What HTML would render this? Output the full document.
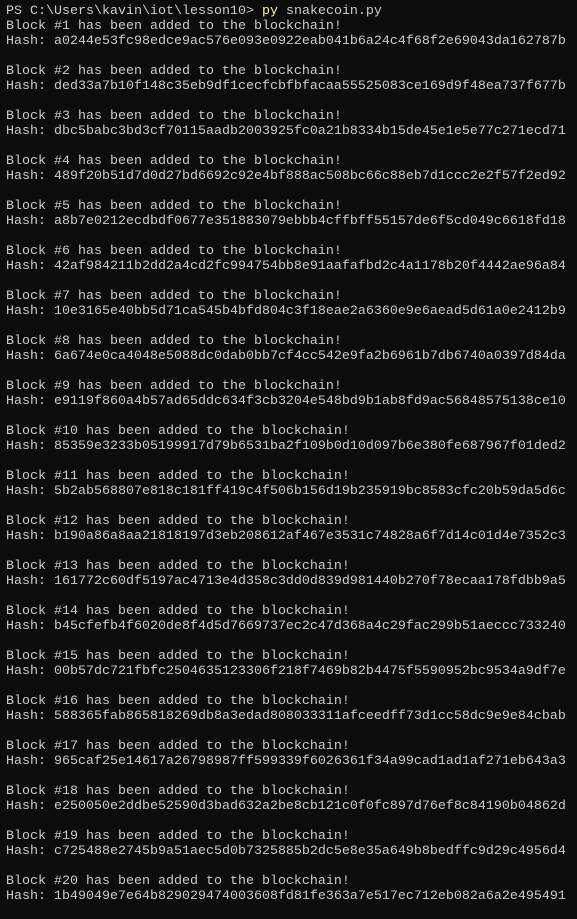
<!DOCTYPE html>
<html><head><meta charset="utf-8"><style>
html,body{margin:0;padding:0;background:#0c0c0c;width:577px;height:919px;overflow:hidden}
pre{margin:0;position:absolute;left:6px;top:4px;font-family:"Liberation Mono",monospace;font-size:13.33px;line-height:15px;color:#cccccc}
.y{color:#f9f1a5}
</style></head><body><pre>PS C:\Users\kavin\iot\lesson10&gt; <span class="y">py</span> snakecoin.py
Block #1 has been added to the blockchain!
Hash: a0244e53fc98edce9ac576e093e0922eab041b6a24c4f68f2e69043da162787b

Block #2 has been added to the blockchain!
Hash: ded33a7b10f148c35eb9df1cecfcbfbfacaa55525083ce169d9f48ea737f677b

Block #3 has been added to the blockchain!
Hash: dbc5babc3bd3cf70115aadb2003925fc0a21b8334b15de45e1e5e77c271ecd71

Block #4 has been added to the blockchain!
Hash: 489f20b51d7d0d27bd6692c92e4bf888ac508bc66c88eb7d1ccc2e2f57f2ed92

Block #5 has been added to the blockchain!
Hash: a8b7e0212ecdbdf0677e351883079ebbb4cffbff55157de6f5cd049c6618fd18

Block #6 has been added to the blockchain!
Hash: 42af984211b2dd2a4cd2fc994754bb8e91aafafbd2c4a1178b20f4442ae96a84

Block #7 has been added to the blockchain!
Hash: 10e3165e40bb5d71ca545b4bfd804c3f18eae2a6360e9e6aead5d61a0e2412b9

Block #8 has been added to the blockchain!
Hash: 6a674e0ca4048e5088dc0dab0bb7cf4cc542e9fa2b6961b7db6740a0397d84da

Block #9 has been added to the blockchain!
Hash: e9119f860a4b57ad65ddc634f3cb3204e548bd9b1ab8fd9ac56848575138ce10

Block #10 has been added to the blockchain!
Hash: 85359e3233b05199917d79b6531ba2f109b0d10d097b6e380fe687967f01ded2

Block #11 has been added to the blockchain!
Hash: 5b2ab568807e818c181ff419c4f506b156d19b235919bc8583cfc20b59da5d6c

Block #12 has been added to the blockchain!
Hash: b190a86a8aa21818197d3eb208612af467e3531c74828a6f7d14c01d4e7352c3

Block #13 has been added to the blockchain!
Hash: 161772c60df5197ac4713e4d358c3dd0d839d981440b270f78ecaa178fdbb9a5

Block #14 has been added to the blockchain!
Hash: b45cfefb4f6020de8f4d5d7669737ec2c47d368a4c29fac299b51aeccc733240

Block #15 has been added to the blockchain!
Hash: 00b57dc721fbfc2504635123306f218f7469b82b4475f5590952bc9534a9df7e

Block #16 has been added to the blockchain!
Hash: 588365fab865818269db8a3edad808033311afceedff73d1cc58dc9e9e84cbab

Block #17 has been added to the blockchain!
Hash: 965caf25e14617a26798987ff599339f6026361f34a99cad1ad1af271eb643a3

Block #18 has been added to the blockchain!
Hash: e250050e2ddbe52590d3bad632a2be8cb121c0f0fc897d76ef8c84190b04862d

Block #19 has been added to the blockchain!
Hash: c725488e2745b9a51aec5d0b7325885b2dc5e8e35a649b8bedffc9d29c4956d4

Block #20 has been added to the blockchain!
Hash: 1b49049e7e64b829029474003608fd81fe363a7e517ec712eb082a6a2e495491</pre></body></html>
